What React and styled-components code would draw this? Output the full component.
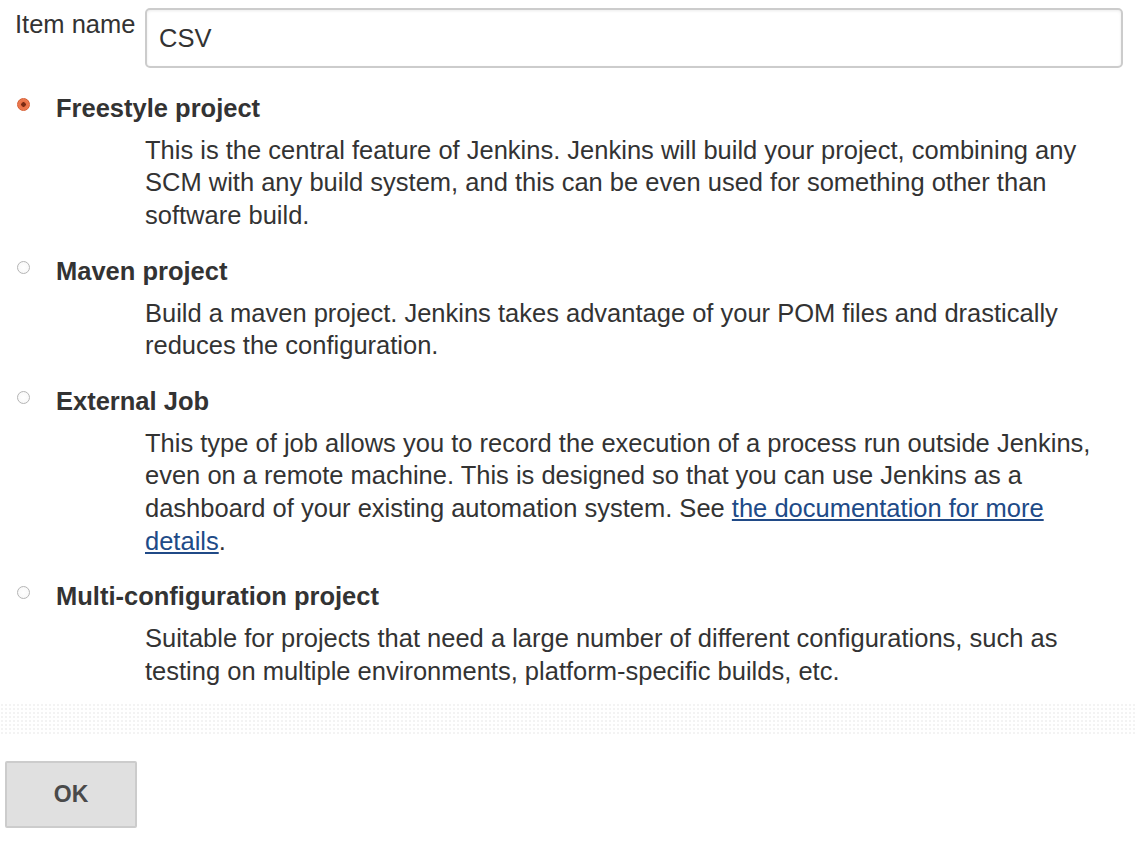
import styled, { createGlobalStyle } from "styled-components";

const GlobalStyle = createGlobalStyle`
  body {
    margin: 0;
    background: #fff;
    font-family: "Liberation Sans", Arial, sans-serif;
    color: #333;
  }
`;

//styled components

const Page = styled.div`
  padding: 8px 12px 20px 5px;
  font-size: 25.5px;
  line-height: 32.7px;
`;

const NameRow = styled.div`
  display: flex;
  align-items: flex-start;
`;

const Label = styled.label`
  width: 140px;
  padding: 0 0 0 10px;
  box-sizing: border-box;
`;

const NameInput = styled.input`
  flex: 1;
  height: 60px;
  box-sizing: border-box;
  border: 2px solid #ccc;
  border-radius: 5px;
  box-shadow: inset 0 1px 3px rgba(0, 0, 0, 0.08);
  padding: 0 0 0 12px;
  font-family: "Liberation Sans", Arial, sans-serif;
  font-size: 25.5px;
  color: #333;
  outline: none;
`;

const ItemList = styled.div`
  display: flex;
  flex-direction: column;
  gap: 23px;
  margin-top: 24px;
`;

const Item = styled.div`
  display: grid;
  grid-template-columns: 51px 89px 1fr;
`;

const Radio = styled.span`
  width: 13px;
  height: 13px;
  box-sizing: border-box;
  margin: 6px 0 0 12px;
  border-radius: 50%;
  border: 1px solid ${(p) => (p.$checked ? "#d65a2e" : "#b5b5b5")};
  background: ${(p) =>
    p.$checked
      ? "radial-gradient(circle, #7a2a12 0 2px, #e86d42 2.5px, #f08a62 100%)"
      : "radial-gradient(circle, #fff 0, #f6f6f6 100%)"};
`;

const Title = styled.div`
  grid-column: 2 / 4;
  font-weight: bold;
  margin-bottom: 9px;
`;

const Desc = styled.div`
  grid-column: 3;
  padding-right: 30px;
`;

const DocLink = styled.a`
  color: #204a87;
  text-decoration: underline;
`;

const Separator = styled.div`
  height: 32px;
  margin: 15px -12px 0 -5px;
  background-image: radial-gradient(circle, #f3f3f3 1px, transparent 1.2px);
  background-size: 4px 4px;
`;

const OkButton = styled.button`
  display: block;
  margin-top: 26px;
  width: 132px;
  height: 67px;
  background: #e0e0e0;
  border: 2px solid #ccc;
  border-radius: 2px;
  font-family: "Liberation Sans", Arial, sans-serif;
  font-size: 23px;
  font-weight: bold;
  color: #4a4a4a;
`;

const items = [
  {
    title: "Freestyle project",
    checked: true,
    text: "This is the central feature of Jenkins. Jenkins will build your project, combining any SCM with any build system, and this can be even used for something other than software build.",
  },
  {
    title: "Maven project",
    text: "Build a maven project. Jenkins takes advantage of your POM files and drastically reduces the configuration.",
  },
  {
    title: "External Job",
    text: (
      <>
        This type of job allows you to record the execution of a process run outside Jenkins,
        even on a remote machine. This is designed so that you can use Jenkins as a dashboard
        of your existing automation system. See{" "}
        <DocLink href="#">the documentation for more details</DocLink>.
      </>
    ),
  },
  {
    title: "Multi-configuration project",
    text: "Suitable for projects that need a large number of different configurations, such as testing on multiple environments, platform-specific builds, etc.",
  },
];

const App = () => {
  return (
    <Page>
      <GlobalStyle />
      <NameRow>
        <Label>Item name</Label>
        <NameInput defaultValue="CSV" />
      </NameRow>
      <ItemList>
        {items.map((item) => (
          <Item key={item.title}>
            <Radio $checked={item.checked} />
            <Title>{item.title}</Title>
            <Desc>{item.text}</Desc>
          </Item>
        ))}
      </ItemList>
      <Separator />
      <OkButton>OK</OkButton>
    </Page>
  );
};

export default App;
